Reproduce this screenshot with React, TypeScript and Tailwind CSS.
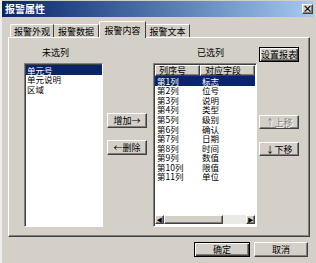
import React from 'react';

const raised =
  'border border-t-white border-l-white border-r-[#404040] border-b-[#404040] shadow-[inset_-1px_-1px_0_#808080] bg-[#d4d0c8]';
const defaultBtn =
  'border border-black shadow-[inset_1px_1px_0_#fff,inset_-1px_-1px_0_#404040,inset_-2px_-2px_0_#808080] bg-[#d4d0c8]';
const sunken =
  'border border-t-[#808080] border-l-[#808080] border-r-white border-b-white shadow-[inset_1px_1px_0_#404040] bg-white';

const unselected = ['单元号', '单元说明', '区域'];

const selected = [
  ['第1列', '标志'],
  ['第2列', '位号'],
  ['第3列', '说明'],
  ['第4列', '类型'],
  ['第5列', '级别'],
  ['第6列', '确认'],
  ['第7列', '日期'],
  ['第8列', '时间'],
  ['第9列', '数值'],
  ['第10列', '限值'],
  ['第11列', '单位'],
];

const Btn: React.FC<{ label: string; className?: string; disabled?: boolean; def?: boolean }> = ({
  label,
  className = '',
  disabled,
  def,
}) => (
  <div
    className={`flex items-center justify-center text-[9px] leading-[9px] ${def ? defaultBtn : raised} ${
      disabled ? 'text-[#808080] [text-shadow:1px_1px_0_#fff]' : 'text-black'
    } ${className}`}
  >
    {label}
  </div>
);

export default function App() {
  return (
    <div className="w-[316px] h-[263px] bg-[#d4d0c8] border-l-2 border-l-[#eeeeee] font-['Noto_Sans_CJK_SC','SimSun',sans-serif] leading-none overflow-hidden">
      {/* title bar */}
      <div className="mt-[1px] mr-[2px] h-[16px] flex items-center justify-between bg-gradient-to-r from-[#0a246a] to-[#a6caf0]">
        <span className="pl-[3px] text-white text-[10px] leading-[10px] font-bold">报警属性</span>
        <div className={`w-[11px] h-[10px] mr-[1px] flex items-center justify-center text-[10px] leading-[10px] font-bold ${raised}`}>
          ×
        </div>
      </div>

      {/* tabs */}
      <div className="mt-[4px] ml-[8px] h-[16px] flex items-end text-[9px] leading-[9px]">
        <div className="w-[44px] h-[13px] flex items-center justify-center border-t border-l border-t-white border-l-white border-r border-r-[#404040] rounded-tl-[2px]">
          报警外观
        </div>
        <div className="w-[45px] h-[13px] flex items-center justify-center border-t border-t-white border-r border-r-[#404040]">
          报警数据
        </div>
        <div className="relative z-10 -mb-[1px] w-[47px] h-[17px] flex items-center justify-center border-t border-l border-t-white border-l-white border-r border-r-[#404040] bg-[#d4d0c8] rounded-tl-[2px]">
          报警内容
        </div>
        <div className="w-[44px] h-[13px] flex items-center justify-center border-t border-t-white border-r border-r-[#404040]">
          报警文本
        </div>
      </div>

      {/* panel */}
      <div className="ml-[6px] w-[302px] h-[200px] border border-t-white border-l-white border-r-[#404040] border-b-[#404040] shadow-[inset_-1px_-1px_0_#808080] flex pl-[15px] text-[9px] leading-[9px]">
        {/* left column */}
        <div className="w-[79px] flex flex-col">
          <div className="h-[25px] pl-[18px] pt-[10px]">未选列</div>
          <div className={`h-[164px] ${sunken} pt-[1px] pl-[1px]`}>
            {unselected.map((t, i) => (
              <div
                key={t}
                className={`h-[9.6px] flex items-center pl-[1px] text-[8.5px] leading-[8.5px] ${
                  i === 0 ? 'bg-[#0a246a] text-white' : ''
                }`}
              >
                {t}
              </div>
            ))}
          </div>
        </div>

        {/* middle buttons */}
        <div className="ml-[4px] w-[40px] pt-[75px] flex flex-col gap-[12px]">
          <Btn label="增加→" className="h-[15px]" />
          <Btn label="←删除" className="h-[15px]" />
        </div>

        {/* right column */}
        <div className="ml-[6px] w-[104px] flex flex-col">
          <div className="h-[25px] pl-[44px] pt-[10px]">已选列</div>
          <div className={`h-[164px] ${sunken} p-[1px] flex flex-col`}>
            <div className="h-[11px] flex">
              <div className={`w-[45px] flex items-center pl-[3px] ${raised}`}>列序号</div>
              <div className={`flex-1 flex items-center pl-[4px] ${raised}`}>对应字段</div>
            </div>
            <div className="flex-1">
              {selected.map(([a, b], i) => (
                <div
                  key={a}
                  className={`h-[9.6px] flex items-center text-[8.5px] leading-[8.5px] ${
                    i === 0 ? 'bg-[#0a246a] text-white' : ''
                  }`}
                >
                  <span className="w-[47px] pl-[2px]">{a}</span>
                  <span>{b}</span>
                </div>
              ))}
            </div>
            <div className="h-[9px] flex mb-[1px]">
              <div className={`w-[9px] flex items-center justify-center text-[6px] leading-[6px] ${raised}`}>◀</div>
              <div className={`w-[59px] ${raised}`} />
              <div className="flex-1 bg-[#ebe9e5]" />
              <div className={`w-[9px] flex items-center justify-center text-[6px] leading-[6px] ${raised}`}>▶</div>
            </div>
          </div>
        </div>

        {/* right buttons */}
        <div className="ml-[2px] w-[40px] pt-[9px] flex flex-col">
          <Btn label="设置报表" def className="h-[15px]" />
          <Btn label="↑上移" disabled className="h-[14px] mt-[53px]" />
          <Btn label="↓下移" className="h-[14px] mt-[13px]" />
        </div>
      </div>

      {/* bottom buttons */}
      <div className="mt-[5px] ml-[192px] flex gap-[4px]">
        <Btn label="确定" def className="w-[56px] h-[15px]" />
        <Btn label="取消" className="w-[54px] h-[15px]" />
      </div>
    </div>
  );
}
